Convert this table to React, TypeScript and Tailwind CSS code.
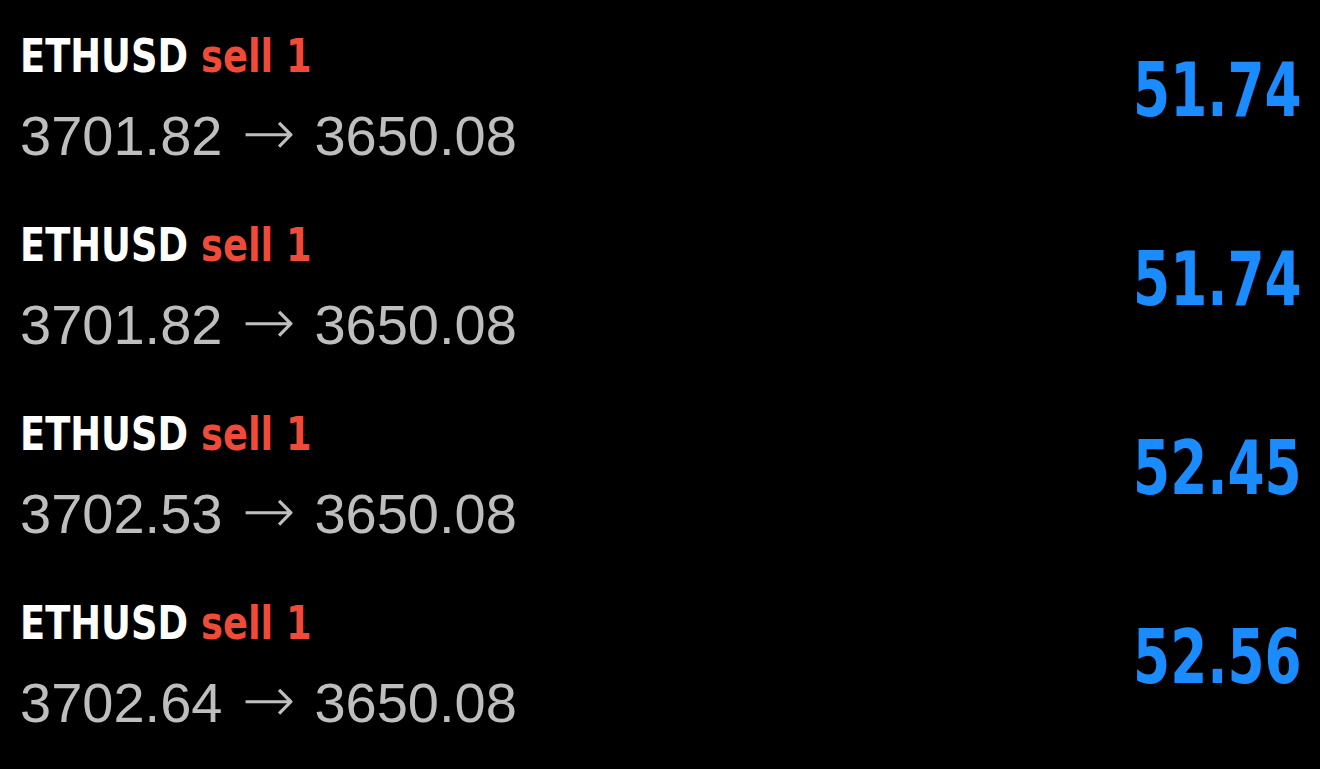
const trades = [
  { entry: "3701.82", exit: "3650.08", pnl: "51.74" },
  { entry: "3701.82", exit: "3650.08", pnl: "51.74" },
  { entry: "3702.53", exit: "3650.08", pnl: "52.45" },
  { entry: "3702.64", exit: "3650.08", pnl: "52.56" },
];

const narrow = "font-['DejaVu_Sans_Condensed','Liberation_Sans',sans-serif]";

export default function App() {
  return (
    <div className="w-[1320px] h-[769px] bg-black overflow-hidden">
      {trades.map((t, i) => (
        <div key={i} className="flex justify-between items-start h-[189px] px-5">
          <div className="pt-[31px]">
            <div
              className={`${narrow} inline-block origin-left scale-x-[0.89] whitespace-nowrap font-bold text-[46px] leading-[50px] text-white`}
            >
              ETHUSD <span className="text-[#f04a38]">sell 1</span>
            </div>
            <div className="mt-[24px] whitespace-nowrap font-['Liberation_Sans',Arial,sans-serif] text-[56px] leading-[56px] text-[#bebebe]">
              {t.entry}
              <span className="inline-block w-[56px] ml-[18px] mr-[18px] text-center font-['DejaVu_Sans',sans-serif] font-extralight text-[64px] leading-[56px]">
                →
              </span>
              {t.exit}
            </div>
          </div>
          <div
            className={`mt-[52px] -mr-[2px] ${narrow} inline-block origin-right scale-x-[0.8] font-bold text-[74px] leading-[76px] text-[#1a8cff]`}
          >
            {t.pnl}
          </div>
        </div>
      ))}
    </div>
  );
}
